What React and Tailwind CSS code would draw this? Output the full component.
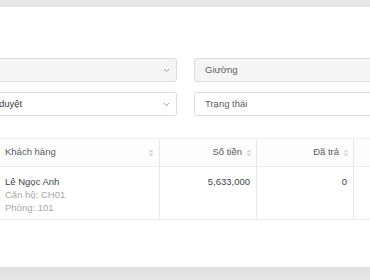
import React from 'react';

function Chevron() {
  return (
    <svg width="7" height="5" viewBox="0 0 7 5" className="shrink-0">
      <path d="M1 1.2 L3.5 3.6 L6 1.2" fill="none" stroke="#9a9a9a" strokeWidth="1" />
    </svg>
  );
}

function SortIcon() {
  return (
    <svg width="6" height="8" viewBox="0 0 6 8" className="shrink-0">
      <path d="M3 0.5 L5.5 3.2 L0.5 3.2 Z" fill="#d4d4d8" />
      <path d="M3 7.5 L5.5 4.8 L0.5 4.8 Z" fill="#d4d4d8" />
    </svg>
  );
}

export default function App() {
  return (
    <div className="w-[370px] h-[280px] overflow-hidden bg-[#e4e4e4] flex flex-col font-['Liberation_Sans',Arial,sans-serif]">
      <div className="h-[7px] shrink-0 bg-[#e6e6e6]" />
      <div className="h-[260px] shrink-0 bg-white overflow-hidden">
        <div className="-ml-[200px] w-[780px] pt-[51px]">
          {/* filters */}
          <div className="flex gap-[17px]">
            <div className="w-[377px] h-[24px] rounded-[3px] border border-[#dcdcdc] bg-[#f5f5f5] flex items-center justify-end pr-[6px]">
              <Chevron />
            </div>
            <div className="w-[377px] h-[24px] rounded-[3px] border border-[#dcdcdc] bg-[#f5f5f5] flex items-center pl-[10px] text-[9.5px] text-[#5e5e5e]">
              Giường
            </div>
          </div>
          <div className="flex gap-[17px] mt-[10px]">
            <div className="w-[377px] h-[24px] rounded-[3px] border border-[#dcdcdc] bg-white flex items-center justify-between pr-[6px] text-[9.5px] text-[#3c3c3c]">
              <span className="pl-[177px]">Chờ duyệt</span>
              <Chevron />
            </div>
            <div className="w-[377px] h-[24px] rounded-[3px] border border-[#dcdcdc] bg-white flex items-center pl-[10px] text-[9.5px] text-[#5e5e5e]">
              Trạng thái
            </div>
          </div>

          {/* table */}
          <div className="mt-[22px] border-t border-[#f0f0f4] text-[9.5px]">
            <div className="flex h-[28px] border-b border-[#ebebf2] bg-[#fdfdfe] text-[#5a5a5a]">
              <div className="w-[360px] flex items-center justify-between pl-[205px] pr-[5px] border-r border-[#e6e6f0]">
                <span>Khách hàng</span>
                <SortIcon />
              </div>
              <div className="w-[97px] flex items-center justify-end gap-[4px] pr-[4px] border-r border-[#e6e6f0]">
                <span>Số tiền</span>
                <SortIcon />
              </div>
              <div className="w-[97px] flex items-center justify-end gap-[4px] pr-[4px] border-r border-[#e6e6f0]">
                <span>Đã trả</span>
                <SortIcon />
              </div>
              <div className="flex-1" />
            </div>
            <div className="flex h-[53px] border-b border-[#ebebf2] text-[#444]">
              <div className="w-[360px] pl-[205px] pt-[8px] border-r border-[#e6e6f0] leading-[13px]">
                <div>Lê Ngọc Anh</div>
                <div className="text-[#a6a6a6]">Căn hộ: CH01</div>
                <div className="text-[#a6a6a6]">Phòng: 101</div>
              </div>
              <div className="w-[97px] pt-[8px] pr-[6px] text-right border-r border-[#e6e6f0] leading-[13px]">
                5,633,000
              </div>
              <div className="w-[97px] pt-[8px] pr-[6px] text-right border-r border-[#e6e6f0] leading-[13px]">
                0
              </div>
              <div className="flex-1" />
            </div>
          </div>
        </div>
      </div>
      <div className="flex-1 bg-gradient-to-b from-[#e0e0e0] to-[#e7e7e7]" />
    </div>
  );
}
